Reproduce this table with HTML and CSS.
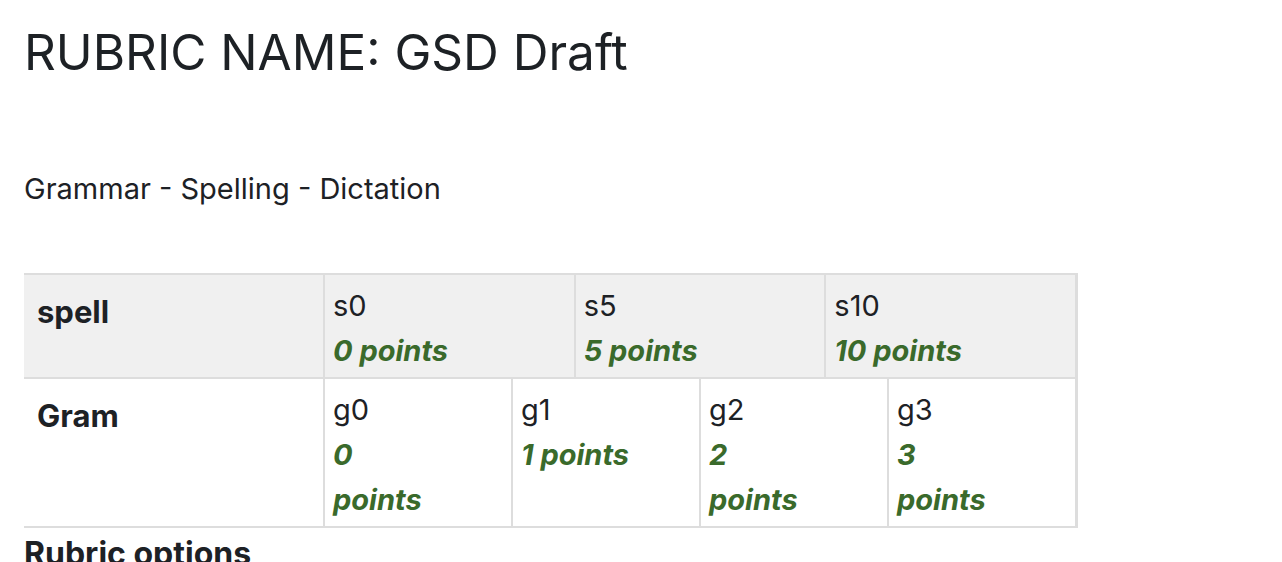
FILE: index.html
```html
<!DOCTYPE html>
<html>
<head>
<meta charset="utf-8">
<link rel="stylesheet" href="styles.css">
</head>
<body>
<div class="page">
  <h1 class="title">RUBRIC NAME: GSD Draft</h1>
  <p class="desc">Grammar - Spelling - Dictation</p>
  <div class="rubric">
    <div class="criterion odd">
      <div class="crit-name">spell</div>
      <div class="levels">
        <div class="level"><div class="def">s0</div><div class="score">0 points</div></div>
        <div class="level"><div class="def">s5</div><div class="score">5 points</div></div>
        <div class="level"><div class="def">s10</div><div class="score">10 points</div></div>
      </div>
    </div>
    <div class="criterion even">
      <div class="crit-name">Gram</div>
      <div class="levels">
        <div class="level"><div class="def">g0</div><div class="score">0<br>points</div></div>
        <div class="level"><div class="def">g1</div><div class="score">1 points</div></div>
        <div class="level"><div class="def">g2</div><div class="score">2<br>points</div></div>
        <div class="level"><div class="def">g3</div><div class="score">3<br>points</div></div>
      </div>
    </div>
  </div>
  <h3 class="options">Rubric options</h3>
</div>
</body>
</html>
```
FILE: styles.css
```css
html, body {
  margin: 0;
  padding: 0;
  background: #ffffff;
}
body {
  font-family: Inter, "Noto Sans", sans-serif;
  color: #1d2125;
}
.page {
  padding: 0 24px;
}
.title {
  font-size: 49.5px;
  font-weight: 400;
  margin: 0;
  padding-top: 23px;
  line-height: 1.2;
}
.desc {
  font-size: 29px;
  margin: 85px 0 0 0;
  line-height: 1.5;
}
.rubric {
  margin-top: 62px;
  width: 1051px;
  border-top: 2px solid #dddddd;
  border-right: 3px solid #dddddd;
}
.criterion {
  display: flex;
  border-bottom: 2px solid #dddddd;
}
.criterion.odd {
  background: #f0f0f0;
}
.crit-name {
  width: 299px;
  flex: none;
  font-size: 31px;
  font-weight: 700;
  padding: 14px 13px;
  box-sizing: border-box;
  line-height: 45px;
}
.levels {
  flex: 1;
  display: flex;
}
.level {
  flex: 1 1 0;
  min-width: 0;
  border-left: 2px solid #dddddd;
  padding: 8px 8px 4px;
  font-size: 29px;
  line-height: 45px;
}
.score {
  color: #3a6a2b;
  font-weight: 700;
  font-style: italic;
}
.options {
  font-size: 32px;
  font-weight: 700;
  margin: 6px 0 0 0;
}
```
